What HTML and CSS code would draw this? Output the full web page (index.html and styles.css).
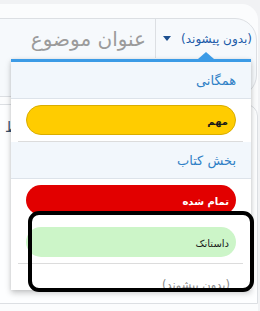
FILE: index.html
```html
<!DOCTYPE html>
<html lang="fa">
<head>
<meta charset="utf-8">
<link rel="stylesheet" href="styles.css">
</head>
<body>
<div class="page">
  <div class="panel">
    <div class="field">
      <div class="prefix">
        <span class="prefix-text">(بدون پیشوند)</span>
        <span class="caret"></span>
      </div>
      <div class="input">عنوان موضوع</div>
    </div>
    <div class="body-box"><span class="body-text">ط</span></div>
  </div>

  <div class="dropdown">
    <span class="pointer"></span>
    <div class="group-head">همگانی</div>
    <div class="opt"><span class="pill pill-yellow">مهم</span></div>
    <div class="sep"></div>
    <div class="group-head">بخش کتاب</div>
    <div class="opt"><span class="pill pill-red">تمام شده</span></div>
    <div class="opt"><span class="pill pill-green">داستانک</span></div>
    <div class="sep"></div>
    <div class="opt-plain">(بدون پیشوند)</div>
  </div>

  <div class="annot"></div>
</div>
</body>
</html>
```

FILE: styles.css
```css
html, body {
  margin: 0;
  padding: 0;
}
body {
  background: #f1f2f4;
  font-family: "DejaVu Sans", "Noto Sans", sans-serif;
  width: 260px;
  height: 311px;
  overflow: hidden;
}
.page {
  position: relative;
  width: 260px;
  height: 311px;
  padding-top: 4px;
  box-sizing: border-box;
}
.panel {
  width: 258px;
  height: 307px;
  background: #fbfcfd;
  border-radius: 0 16px 0 0;
  padding-top: 14px;
  box-sizing: border-box;
  overflow: hidden;
  display: flex;
  flex-direction: column;
  align-items: flex-end;
}
.field {
  direction: rtl;
  width: 280px;
  height: 79px;
  margin-right: 1px;
  box-sizing: border-box;
  border: 1px solid #dcdfe3;
  border-radius: 0 22px 22px 0;
  background: #f6f9fc;
  display: flex;
  align-items: flex-start;
}
.prefix {
  height: 39px;
  width: 101px;
  box-sizing: border-box;
  border-left: 1px solid #dcdfe3;
  display: flex;
  align-items: center;
  padding-right: 4px;
  gap: 10px;
}
.prefix-text {
  font-size: 12px;
  color: #1d5ba8;
  white-space: nowrap;
}
.caret {
  width: 0;
  height: 0;
  border-left: 4px solid transparent;
  border-right: 4px solid transparent;
  border-top: 5px solid #1d4f8f;
}
.input {
  height: 39px;
  display: flex;
  align-items: center;
  padding-right: 9px;
  font-size: 20px;
  color: #9b9b9b;
  white-space: nowrap;
}
.body-box {
  margin-top: 7px;
  width: 280px;
  height: 200px;
  box-sizing: border-box;
  border: 1px solid #dcdfe3;
  border-radius: 0 12px 0 0;
  background: #fdfeff;
  padding: 12px 0 0 26px;
}
.body-text {
  font-size: 14px;
  color: #3a5068;
  white-space: nowrap;
}
.dropdown {
  position: absolute;
  left: 11px;
  top: 59px;
  width: 240px;
  height: 231px;
  box-sizing: border-box;
  background: #ffffff;
  border-top: 3px solid #3c9be6;
  box-shadow: 0 3px 6px rgba(0, 0, 0, 0.22), 0 0 3px rgba(0, 0, 0, 0.08);
  direction: rtl;
  display: flex;
  flex-direction: column;
}
.dropdown > .group-head,
.dropdown > .opt,
.dropdown > .sep,
.dropdown > .opt-plain {
  flex: none;
}
.pointer {
  position: absolute;
  top: -10px;
  left: 187px;
  width: 0;
  height: 0;
  border-left: 8px solid transparent;
  border-right: 8px solid transparent;
  border-bottom: 7px solid #3c9be6;
}
.group-head {
  height: 37px;
  box-sizing: border-box;
  background: #f2f7fc;
  border-bottom: 1px solid #dde3ea;
  padding-right: 15px;
  display: flex;
  align-items: center;
  font-size: 13px;
  color: #2f80c6;
}
.opt {
  padding: 6px 15px;
  display: flex;
}
.pill {
  flex: 1;
  height: 30px;
  box-sizing: border-box;
  border-radius: 15px;
  padding: 2px 7px 0 0;
  display: flex;
  align-items: center;
  font-size: 10px;
  font-weight: bold;
  color: #1a1a1a;
}
.pill-yellow {
  background: #ffcc00;
  border: 1px solid #d9ad00;
}
.pill-red {
  background: #e20000;
  color: #ffffff;
}
.pill-green {
  background: #ccf5c8;
  font-weight: normal;
  color: #1a1a1a;
}
.sep {
  height: 1px;
  background: #dcdcdc;
  margin: 0 8px 0 7px;
}
.opt-plain {
  height: 26px;
  box-sizing: border-box;
  overflow: hidden;
  padding: 14px 21px 0 0;
  font-size: 11.5px;
  line-height: 14px;
  color: #8a8a8a;
  white-space: nowrap;
}
.annot {
  position: absolute;
  left: 28px;
  top: 211px;
  width: 226px;
  height: 81px;
  box-sizing: border-box;
  border: 4px solid #000000;
  border-radius: 11px;
}
```
